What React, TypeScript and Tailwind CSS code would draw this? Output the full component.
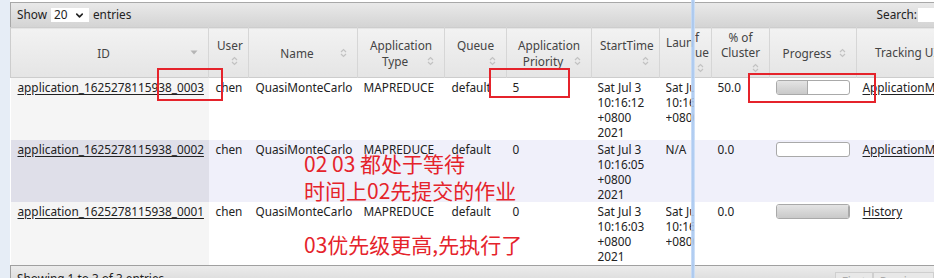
import { ChevronDown } from "lucide-react";

const font = { fontFamily: '"Noto Sans", "Noto Sans CJK SC", sans-serif' };
const cjk = { fontFamily: '"Noto Sans CJK SC", sans-serif' };

function SortIcon() {
  return (
    <svg width="7" height="10" viewBox="0 0 7 10" fill="none">
      <path d="M1 4 L3.5 1.5 L6 4 M1 6 L3.5 8.5 L6 6" stroke="#c2c2c2" strokeWidth="1.2" />
    </svg>
  );
}

function SortedDesc() {
  return (
    <svg width="8" height="5" viewBox="0 0 8 5">
      <path d="M0.5 0.5 H7.5 L4 4.5 Z" fill="#b5b5b5" />
    </svg>
  );
}

type HeadProps = { lines: string[]; icon: "last" | "own"; sorted?: boolean };

function Head({ lines, icon, sorted }: HeadProps) {
  const body = icon === "last" ? lines.slice(0, -1) : lines;
  const last = lines[lines.length - 1];
  return (
    <th className="h-[50px] p-0 font-normal align-middle border-r border-[#d6d6d6]">
      <div className="px-[8px] leading-[16px] text-[11.8px] text-[#444]">
        {body.map((l) => (
          <div key={l} className="text-center whitespace-nowrap">
            {l}
          </div>
        ))}
        {icon === "last" ? (
          <div className="flex">
            <span className="flex-1 text-center whitespace-nowrap">{last}</span>
            <span className="w-[12px] flex items-center justify-center">
              {sorted ? <SortedDesc /> : <SortIcon />}
            </span>
          </div>
        ) : (
          <div className="flex justify-end h-[15px] items-center">
            <span className="w-[12px] flex justify-center">
              <SortIcon />
            </span>
          </div>
        )}
      </div>
    </th>
  );
}

function Progress({ fill }: { fill: number }) {
  return (
    <div className="mt-[1px] w-[74px] h-[15px] rounded-[3px] border border-[#a9a9a9] bg-white overflow-hidden flex">
      {fill > 0 && (
        <div
          className="h-full bg-gradient-to-b from-[#e4e4e4] to-[#c9c9c9] border-r border-[#a9a9a9]"
          style={{ width: `${fill}%` }}
        />
      )}
    </div>
  );
}

const rows = [
  {
    id: "application_1625278115938_0003",
    prio: "5",
    start: ["Sat Jul 3", "10:16:12", "+0800", "2021"],
    launch: ["Sat Jul 3", "10:16:12", "+0800"],
    pct: "50.0",
    fill: 44,
    track: "ApplicationMaster",
  },
  {
    id: "application_1625278115938_0002",
    prio: "0",
    start: ["Sat Jul 3", "10:16:05", "+0800", "2021"],
    launch: ["N/A"],
    pct: "0.0",
    fill: 0,
    track: "ApplicationMaster",
  },
  {
    id: "application_1625278115938_0001",
    prio: "0",
    start: ["Sat Jul 3", "10:16:03", "+0800", "2021"],
    launch: ["Sat Jul 3", "10:16:03", "+0800"],
    pct: "0.0",
    fill: 100,
    track: "History",
  },
];

const widths = [198, 40, 109, 87, 62, 85, 68, 52, 58, 87, 130];

export default function App() {
  return (
    <div className="relative w-[934px] h-[278px] overflow-hidden bg-white flex text-[11.8px] text-[#222]" style={font}>
      <div className="w-[10px] shrink-0 bg-[#e6edf6]" />
      <div className="flex-1 min-w-0 pt-[2px] overflow-hidden">
        <div className="h-[25px] border-t border-l border-[#a8a8a8] bg-gradient-to-b from-[#e9e9e9] to-[#d4d4d4] flex items-center justify-between pl-[6px]">
          <div className="flex items-center gap-[4px] text-[#222]">
            <span>Show</span>
            <div className="w-[38px] h-[14px] bg-white flex items-center justify-between pl-[3px] pr-[4px]">
              <span>20</span>
              <ChevronDown size={11} strokeWidth={3.5} />
            </div>
            <span>entries</span>
          </div>
          <div className="flex items-center gap-[1px]">
            <span>Search:</span>
            <div className="w-[16px] h-[14px] bg-white" />
          </div>
        </div>

        <table className="table-fixed border-collapse w-[976px]">
          <colgroup>
            {widths.map((w, i) => (
              <col key={i} style={{ width: w }} />
            ))}
          </colgroup>
          <thead>
            <tr className="bg-gradient-to-b from-[#f2f2f2] to-[#e5e5e5] border-t border-b border-[#cdcdcd] border-l">
              <Head lines={["ID"]} icon="last" sorted />
              <Head lines={["User"]} icon="own" />
              <Head lines={["Name"]} icon="last" />
              <Head lines={["Application", "Type"]} icon="last" />
              <Head lines={["Queue"]} icon="own" />
              <Head lines={["Application", "Priority"]} icon="last" />
              <Head lines={["StartTime"]} icon="own" />
              <th className="h-[50px] p-0 font-normal align-middle border-r border-[#d6d6d6] text-[11.8px] text-[#444]">
                <div className="flex leading-[15px]">
                  <div className="w-[34px] pl-[6px] overflow-hidden whitespace-nowrap pt-[5px]">LaunchTime</div>
                  <div className="flex-1 pl-[1px] text-left">
                    <div>f</div>
                    <div>ue</div>
                    <div className="flex justify-center pr-[6px] h-[15px] items-center">
                      <SortIcon />
                    </div>
                  </div>
                </div>
              </th>
              <th className="h-[50px] p-0 font-normal align-middle border-r border-[#d6d6d6]">
                <div className="px-[8px] leading-[15px] text-[11.8px] text-[#444]">
                  <div className="text-center">% of</div>
                  <div className="text-center">Cluster</div>
                  <div className="flex justify-end h-[15px] items-center">
                    <span className="w-[12px] flex justify-center">
                      <SortIcon />
                    </span>
                  </div>
                </div>
              </th>
              <Head lines={["Progress"]} icon="last" />
              <th className="h-[50px] p-0 font-normal align-middle text-[11.8px] text-[#444] text-left pl-[18px] whitespace-nowrap">
                Tracking UI
              </th>
            </tr>
          </thead>
          <tbody>
            {rows.map((r, i) => {
              const even = i === 1;
              return (
                <tr key={r.id} className={`${i === 2 ? "h-[63px]" : "h-[62px]"} align-top leading-[15px] ${even ? "bg-[#f0f0fa]" : "bg-white"}`}>
                  <td className={`pl-[7px] pt-[2px] ${even ? "bg-[#dfdfe9]" : "bg-[#f5f5f5]"}`}>
                    <span className="underline underline-offset-[2px]">{r.id}</span>
                  </td>
                  <td className="pl-[7px] pt-[2px]">chen</td>
                  <td className="pl-[7px] pt-[2px]">QuasiMonteCarlo</td>
                  <td className="pl-[6px] pt-[2px]">MAPREDUCE</td>
                  <td className="pl-[7px] pt-[2px]">default</td>
                  <td className="pl-[6px] pt-[2px]">{r.prio}</td>
                  <td className="pl-[6px] pt-[2px] whitespace-nowrap">
                    {r.start.map((s) => (
                      <div key={s}>{s}</div>
                    ))}
                  </td>
                  <td className="pl-[6px] pt-[2px]">
                    <div className="w-[28px] overflow-hidden whitespace-nowrap">
                      {r.launch.map((s) => (
                        <div key={s}>{s}</div>
                      ))}
                    </div>
                  </td>
                  <td className="pl-[6px] pt-[2px]">{r.pct}</td>
                  <td className="pl-[6px] pt-[1px]">
                    <Progress fill={r.fill} />
                  </td>
                  <td className="pl-[6px] pt-[2px] whitespace-nowrap">
                    <span className="underline underline-offset-[2px]">{r.track}</span>
                  </td>
                </tr>
              );
            })}
          </tbody>
        </table>

        <div className="h-[20px] border-t border-l border-[#a0a0a0] bg-gradient-to-b from-[#ececec] to-[#d8d8d8] flex justify-between pl-[6px] pt-[4px]">
          <span>Showing 1 to 3 of 3 entries</span>
          <div className="flex pt-[2px] text-[#aaa]">
            <span className="border border-[#cfcfcf] bg-[#e8e8e8] px-[6px]">First</span>
            <span className="border border-[#cfcfcf] bg-[#e8e8e8] px-[6px]">Previous</span>
          </div>
        </div>
      </div>

      {/* annotations drawn over the screenshot */}
      <div className="absolute left-[157px] top-[68px] w-[66px] h-[33px] border-2 border-[#e5232b]" />
      <div className="absolute left-[489px] top-[68px] w-[81px] h-[30px] border-2 border-[#e5232b]" />
      <div className="absolute left-[748px] top-[73px] w-[128px] h-[30px] border-2 border-[#e5232b]" />
      <div className="absolute left-[304px] top-[153px] text-[21px] leading-none text-[#e5232b] whitespace-nowrap" style={cjk}>
        02 03 都处于等待
      </div>
      <div className="absolute left-[304px] top-[180px] text-[21px] leading-none text-[#e5232b] whitespace-nowrap" style={cjk}>
        时间上02先提交的作业
      </div>
      <div className="absolute left-[304px] top-[234px] text-[21px] leading-none text-[#e5232b] whitespace-nowrap" style={cjk}>
        03优先级更高,先执行了
      </div>
      <div className="absolute left-[691px] top-0 w-[4px] h-full bg-gradient-to-r from-[#cfe0f6] via-[#9bbfee] to-[#d7e6f8] opacity-90" />
    </div>
  );
}
